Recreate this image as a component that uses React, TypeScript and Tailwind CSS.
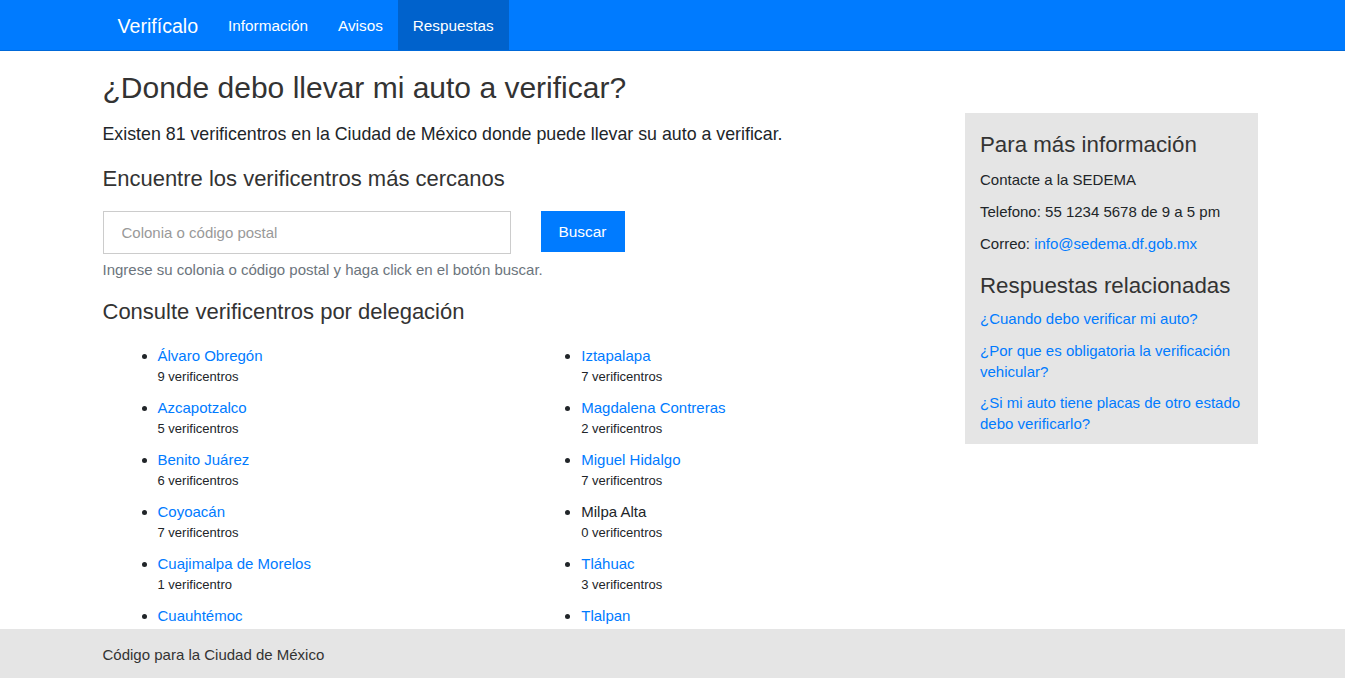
import React from 'react';

type Delegacion = { nombre: string; total: number };

const columnaA: Delegacion[] = [
  { nombre: 'Álvaro Obregón', total: 9 },
  { nombre: 'Azcapotzalco', total: 5 },
  { nombre: 'Benito Juárez', total: 6 },
  { nombre: 'Coyoacán', total: 7 },
  { nombre: 'Cuajimalpa de Morelos', total: 1 },
  { nombre: 'Cuauhtémoc', total: 8 },
  { nombre: 'Gustavo A. Madero', total: 9 },
  { nombre: 'Iztacalco', total: 4 },
];

const columnaB: Delegacion[] = [
  { nombre: 'Iztapalapa', total: 7 },
  { nombre: 'Magdalena Contreras', total: 2 },
  { nombre: 'Miguel Hidalgo', total: 7 },
  { nombre: 'Milpa Alta', total: 0 },
  { nombre: 'Tláhuac', total: 3 },
  { nombre: 'Tlalpan', total: 6 },
  { nombre: 'Venustiano Carranza', total: 4 },
  { nombre: 'Xochimilco', total: 3 },
];

function ListaDelegaciones({ items }: { items: Delegacion[] }) {
  return (
    <ul className="list-disc pl-[55px] w-1/2">
      {items.map((d) => (
        <li key={d.nombre} className="mb-[10px] text-[15px] leading-[22px] marker:text-[#212529]">
          {d.total > 0 ? (
            <a href="#" className="text-[#007bff]">{d.nombre}</a>
          ) : (
            <span className="text-[#212529]">{d.nombre}</span>
          )}
          <div className="text-[13px] leading-[20px] text-[#212529]">
            {d.total} {d.total === 1 ? 'verificentro' : 'verificentros'}
          </div>
        </li>
      ))}
    </ul>
  );
}

export default function App() {
  return (
    <div className="min-h-screen bg-white text-[#212529] font-['Liberation_Sans',Arial,sans-serif] pb-[60px]">
      {/* Barra de navegación */}
      <nav className="bg-[#007bff] border-b border-[#0069d9]">
        <div className="w-[1170px] mx-auto px-[15px] flex items-stretch h-[50px]">
          <a href="#" className="px-[15px] pt-[3px] flex items-center text-[19.6px] text-white">Verifícalo</a>
          <a href="#" className="px-[15px] pt-[3px] flex items-center text-[15.3px] text-white">Información</a>
          <a href="#" className="px-[15px] pt-[3px] flex items-center text-[15.3px] text-white">Avisos</a>
          <a href="#" className="px-[15px] pt-[3px] flex items-center text-[15.3px] text-white bg-[#0062cc]">Respuestas</a>
        </div>
      </nav>

      <div className="w-[1170px] mx-auto px-[15px]">
        <h1 className="text-[30px] leading-[36px] mt-[19px] mb-[7px] text-[#333]">
          ¿Donde debo llevar mi auto a verificar?
        </h1>

        <div className="flex -mx-[15px]">
          {/* Columna principal */}
          <div className="w-9/12 px-[15px]">
            <p className="text-[17.8px] leading-[24px] mt-[9px]">
              Existen 81 verificentros en la Ciudad de México donde puede llevar su auto a verificar.
            </p>

            <h3 className="text-[22px] leading-[26px] mt-[20px] text-[#333]">
              Encuentre los verificentros más cercanos
            </h3>

            <form className="flex items-start gap-[30px] mt-[19px]" onSubmit={(e) => e.preventDefault()}>
              <input
                type="text"
                placeholder="Colonia o código postal"
                className="w-[408px] h-[43px] border border-[#ccc] px-[18px] text-[15px] placeholder:text-[#999] outline-none"
              />
              <button type="submit" className="h-[41px] w-[84px] pt-[1px] bg-[#007bff] text-white text-[15.4px]">
                Buscar
              </button>
            </form>
            <p className="text-[15px] leading-[22px] mt-[5px] text-[#6c757d]">
              Ingrese su colonia o código postal y haga click en el botón buscar.
            </p>

            <h3 className="text-[22px] leading-[26px] mt-[18px] text-[#333]">
              Consulte verificentros por delegación
            </h3>

            <div className="flex mt-[20px]">
              <ListaDelegaciones items={columnaA} />
              <ListaDelegaciones items={columnaB} />
            </div>
          </div>

          {/* Barra lateral */}
          <aside className="w-3/12 self-start bg-[#e5e5e5] px-[15px] pt-[19px] pb-[10px]">
            <h4 className="text-[22.3px] leading-[26px] text-[#333]">Para más información</h4>
            <p className="text-[15px] leading-[22px] mt-[11px] mb-[10px]">Contacte a la SEDEMA</p>
            <p className="text-[15px] leading-[22px] mb-[10px]">Telefono: 55 1234 5678 de 9 a 5 pm</p>
            <p className="text-[15px] leading-[22px]">
              Correo: <a href="#" className="text-[#007bff]">info@sedema.df.gob.mx</a>
            </p>

            <h4 className="text-[22.3px] leading-[26px] mt-[18px] text-[#333]">Respuestas relacionadas</h4>
            <ul className="mt-[9px] flex flex-col gap-[10.5px] text-[15px] leading-[21px]">
              <li><a href="#" className="text-[#007bff]">¿Cuando debo verificar mi auto?</a></li>
              <li><a href="#" className="text-[#007bff]">¿Por que es obligatoria la verificación vehicular?</a></li>
              <li><a href="#" className="text-[#007bff]">¿Si mi auto tiene placas de otro estado debo verificarlo?</a></li>
            </ul>
          </aside>
        </div>
      </div>

      {/* Pie de página */}
      <footer className="fixed bottom-0 left-0 right-0 h-[49px] bg-[#e5e5e5]">
        <div className="w-[1170px] mx-auto px-[15px] pt-[3px] h-full flex items-center">
          <span className="text-[15px] text-[#333]">Código para la Ciudad de México</span>
        </div>
      </footer>
    </div>
  );
}
